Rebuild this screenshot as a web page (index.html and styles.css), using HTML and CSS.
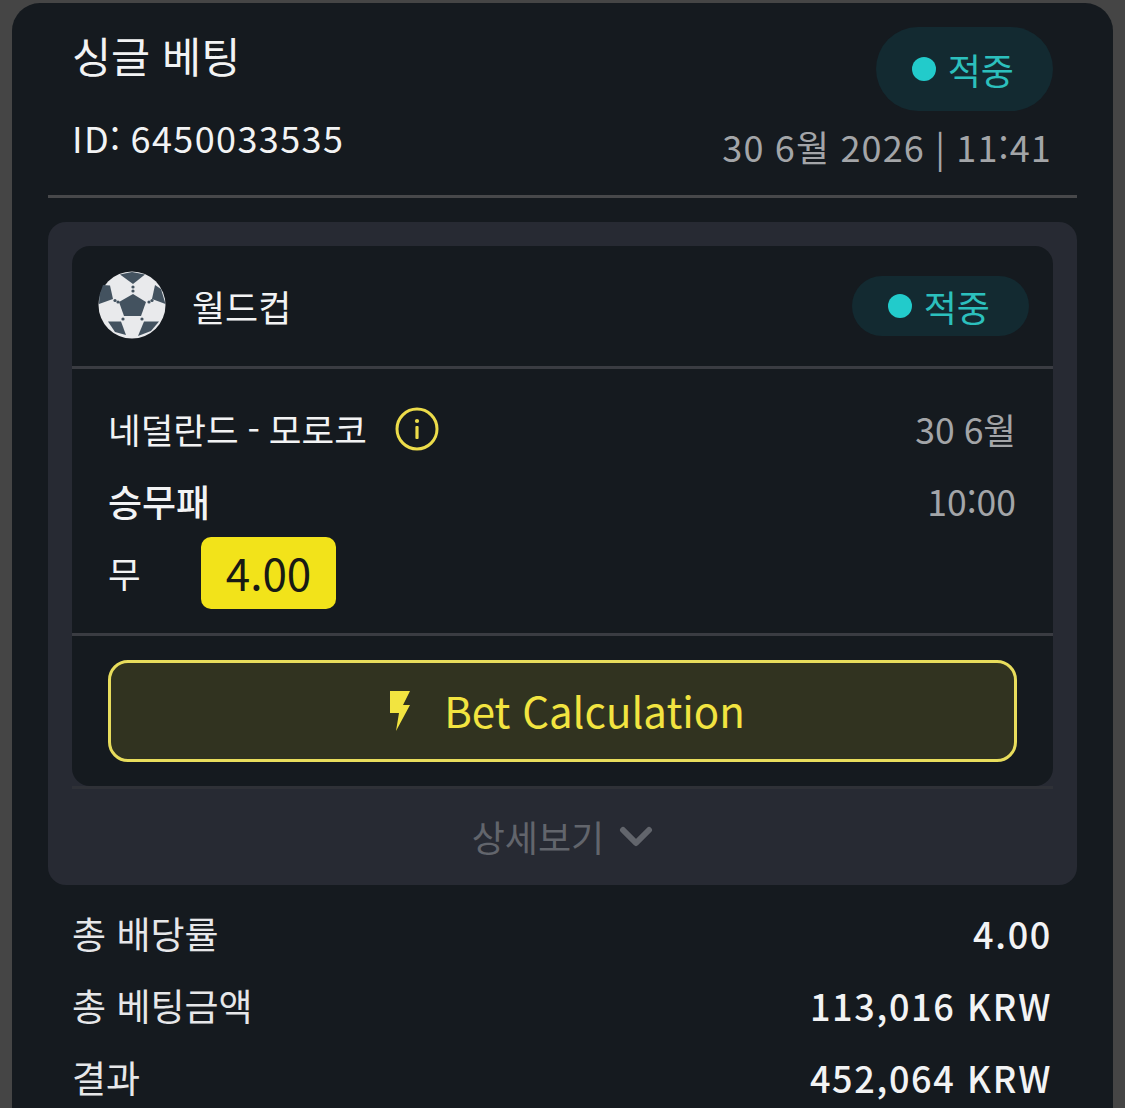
FILE: index.html
```html
<!DOCTYPE html>
<html lang="ko">
<head>
    <meta charset="UTF-8">
    <meta name="viewport" content="width=device-width, initial-scale=1.0">
    <title>싱글 베팅</title>
    <link rel="stylesheet" href="styles.css">
</head>
<body>
    <div class="card">
        <div class="head">
            <div class="head-left">
                <div class="title">싱글 베팅</div>
                <div class="bet-id">ID: 6450033535</div>
            </div>
            <div class="head-right">
                <div class="status status-big"><span class="dot"></span>적중</div>
                <div class="date">30 6월 2026 | 11:41</div>
            </div>
        </div>
        <div class="panel">
            <div class="inner">
                <div class="league">
                    <svg class="ball" viewBox="0 0 68 68">
                        <circle cx="34" cy="34" r="33.5" fill="#e9eaec"/>
                        <g fill="#43525f">
                            <polygon points="35,23 48,31 43,45 26,45 21,31"/>
                            <polygon points="22,3.5 34,1 47,3.5 35,13"/>
                            <polygon points="5,14 12,14.5 15,28 1,33 1.5,24"/>
                            <polygon points="57,14 63,18 67.5,33 54,28"/>
                            <polygon points="10,50.5 23,50.5 28,64 17,61"/>
                            <polygon points="46,50.5 61,50.5 53,60 40,65"/>
                        </g>
                        <g fill="#43525f">
                            <circle cx="35" cy="16" r="1.6"/>
                            <circle cx="35" cy="20" r="1.6"/>
                            <circle cx="17" cy="29.5" r="1.6"/>
                            <circle cx="20" cy="31" r="1.6"/>
                            <circle cx="51" cy="31" r="1.6"/>
                            <circle cx="54" cy="29.5" r="1.6"/>
                            <circle cx="25" cy="48" r="1.6"/>
                            <circle cx="44" cy="48" r="1.6"/>
                        </g>
                    </svg>
                    <div class="league-name">월드컵</div>
                    <div class="status"><span class="dot"></span>적중</div>
                </div>
                <div class="match">
                    <div class="match-row">
                        <div class="teams">네덜란드 - 모로코
                            <svg class="info" viewBox="0 0 44 44">
                                <circle cx="22" cy="22" r="20" fill="none" stroke="#ecdc4a" stroke-width="3"/>
                                <rect x="20.4" y="19" width="3.2" height="13" rx="1" fill="#ecdc4a"/>
                                <circle cx="22" cy="14" r="2.1" fill="#ecdc4a"/>
                            </svg>
                        </div>
                        <div class="muted">30 6월</div>
                    </div>
                    <div class="match-row market-row">
                        <div class="market">승무패</div>
                        <div class="muted">10:00</div>
                    </div>
                    <div class="pick">
                        <div class="pick-name">무</div>
                        <div class="odds">4.00</div>
                    </div>
                </div>
                <div class="calc-wrap">
                    <div class="calc">
                        <svg class="bolt" viewBox="0 0 20 40">
                            <polygon points="0,0 20,0 13,14 20,14 6,40 9,22 0,22"/>
                        </svg>
                        Bet Calculation
                    </div>
                </div>
            </div>
            <div class="more">상세보기
                <svg class="chevron" viewBox="0 0 34 22">
                    <polyline points="4,4 17,17 30,4"/>
                </svg>
            </div>
        </div>
        <div class="totals">
            <div class="total-row"><span>총 배당률</span><span class="num">4.00</span></div>
            <div class="total-row"><span>총 베팅금액</span><span class="num">113,016 KRW</span></div>
            <div class="total-row"><span>결과</span><span class="num">452,064 KRW</span></div>
        </div>
    </div>
</body>
</html>
```

FILE: styles.css
```css
html, body {
    height: 100%;
}
body {
    margin: 0;
    padding: 3px 12px 0;
    box-sizing: border-box;
    overflow: hidden;
    background-color: #454545;
    font-family: "Noto Sans CJK KR", "Noto Sans", sans-serif;
    color: #f2f3f4;
}
.card {
    height: 1140px;
    padding: 0 36px;
    background-color: #151a1f;
    border-radius: 28px 28px 0 0;
}
.head {
    display: flex;
    justify-content: space-between;
    height: 192px;
    border-bottom: 3px solid #47484a;
    padding: 0 24px;
    margin-bottom: 24px;
}
.head-left, .head-right {
    display: flex;
    flex-direction: column;
}
.head-right {
    align-items: flex-end;
    padding-top: 24px;
}
.title {
    font-size: 42.5px;
    line-height: 60px;
    margin-top: 22px;
}
.bet-id {
    font-size: 36px;
    line-height: 50px;
    margin-top: 27px;
    letter-spacing: 1.4px;
    word-spacing: -2.5px;
}
.date {
    font-size: 36px;
    line-height: 50px;
    margin-top: 10px;
    margin-right: 1px;
    color: #a3a5a8;
    letter-spacing: 1.15px;
    word-spacing: -1px;
}
.status {
    display: flex;
    align-items: center;
    gap: 12px;
    height: 60px;
    padding: 0 39px 0 36px;
    border-radius: 30px;
    background-color: #132a31;
    color: #2cc0bd;
    font-size: 36px;
}
.status-big {
    height: 84px;
    border-radius: 42px;
}
.dot {
    width: 24px;
    height: 24px;
    border-radius: 50%;
    background-color: #22cbcb;
}
.panel {
    height: 663px;
    box-sizing: border-box;
    padding: 24px 24px 0;
    background-color: #272a33;
    border-radius: 18px;
}
.inner {
    height: 540px;
    background-color: #151a1f;
    border-radius: 18px;
}
.league {
    display: flex;
    align-items: center;
    height: 123px;
    box-sizing: border-box;
    padding: 0 24px 0 26px;
    border-bottom: 3px solid #3a3c42;
}
.ball {
    width: 68px;
    height: 68px;
    margin-top: -2px;
    margin-right: 26px;
}
.league-name {
    flex: 1;
    font-size: 36px;
}
.match {
    height: 267px;
    box-sizing: border-box;
    padding: 29px 37px 0 36px;
    border-bottom: 3px solid #3a3c42;
}
.match-row {
    display: flex;
    justify-content: space-between;
    align-items: center;
    height: 60px;
    font-size: 35.5px;
    word-spacing: -1px;
}
.market-row {
    margin-top: 12px;
}
.teams {
    display: flex;
    align-items: center;
    gap: 28px;
}
.info {
    width: 44px;
    height: 44px;
    margin-top: 2px;
}
.muted {
    color: #a3a5a8;
}
.market {
    padding-top: 2px;
    font-size: 37px;
    font-weight: 500;
}
.pick {
    display: flex;
    align-items: center;
    margin-top: 7px;
}
.pick-name {
    width: 93px;
    margin-top: -2px;
    font-size: 35.5px;
}
.odds {
    width: 135px;
    height: 72px;
    border-radius: 10px;
    background-color: #f2e31a;
    color: #181a14;
    font-size: 44px;
    line-height: 71px;
    text-align: center;
}
.calc-wrap {
    padding: 24px 36px 0;
}
.calc {
    display: flex;
    align-items: center;
    justify-content: center;
    gap: 34px;
    height: 102px;
    box-sizing: border-box;
    padding: 0 0 3px 10px;
    border: 3px solid #e8dd5c;
    border-radius: 20px;
    background-color: #313320;
    color: #f2e440;
    font-size: 42px;
}
.bolt {
    width: 20px;
    height: 40px;
    margin-top: 3px;
    fill: #f2e440;
}
.more {
    display: flex;
    align-items: center;
    justify-content: center;
    gap: 15px;
    height: 99px;
    box-sizing: border-box;
    padding-bottom: 2px;
    border-top: 3px solid #2f3137;
    color: #62656c;
    font-size: 36px;
}
.chevron {
    width: 34px;
    height: 22px;
    margin-top: 2px;
    fill: none;
    stroke: #62656c;
    stroke-width: 6;
    stroke-linecap: round;
    stroke-linejoin: round;
}
.totals {
    padding: 12px 25px 0 24px;
}
.total-row {
    display: flex;
    justify-content: space-between;
    align-items: center;
    height: 72px;
    font-size: 37px;
    color: #e6e7e9;
}
.num {
    font-size: 36px;
    font-weight: 500;
    letter-spacing: 1.65px;
    color: #f2f3f4;
}
```
